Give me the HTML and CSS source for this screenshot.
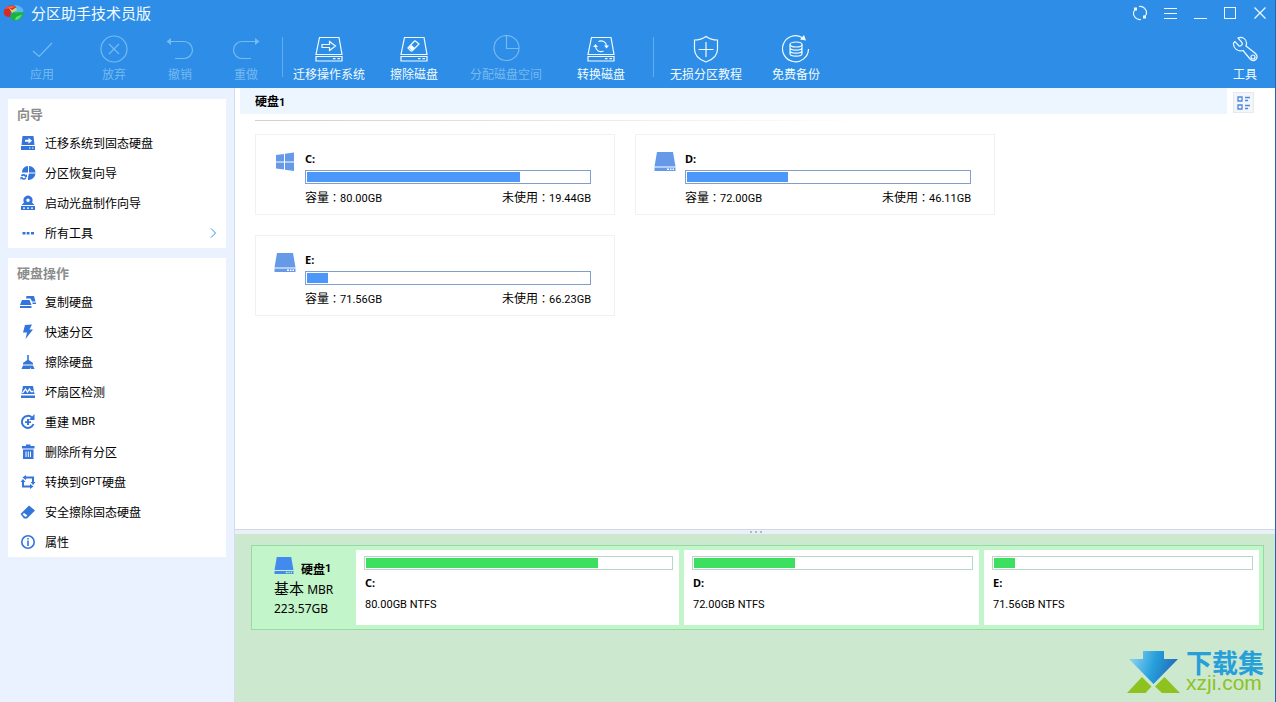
FILE: index.html
```html
<!DOCTYPE html>
<html lang="zh-CN">
<head>
<meta charset="utf-8">
<title>分区助手技术员版</title>
<link rel="stylesheet" href="styles.css">
</head>
<body>
<svg class="defs" aria-hidden="true">
  <symbol id="drive" viewBox="0 0 22 20">
    <path d="M3 0H19L21.500 14.500H.500Z"/><path fill-rule="evenodd" d="M.500 15.500H21.500V19H.500ZM13 16.500V18H15V16.500ZM16 16.500V18H17.500V16.500ZM18.500 16.500V18H20V16.500Z"/>
  </symbol>
  <symbol id="drive-line" viewBox="0 0 28 28">
    <path d="M4.500 2.500H24L27 19.500H1ZM1 21.500H27V26H1ZM18 23.700H20.500M22.500 23.700H25"/>
  </symbol>
</svg>

<header class="top">
  <div class="titlebar">
    <svg class="logo" viewBox="0 0 22 20">
      <path d="M10 3C14 1 20 4 20.500 8C19 11 15 11 11 9Z" fill="#58b8f0"/>
      <path d="M8 11C12 9 17 9 20.500 9.500C20.500 14 16 18 11.500 17.500C8.500 17 7 15 8 11Z" fill="#18b53a"/>
      <path d="M13 14L19 11.500C18 15 15 17 12 17Z" fill="#52e46c"/>
      <path d="M1 8C2 3 9 1 13 4C14 7 11 9 8 9L7 14C3 14 0 12 1 8Z" fill="#d62a23"/>
      <path d="M2 6C4 3 9 2 12 4C9 6 5 5 2 6Z" fill="#f5624d"/>
      <path d="M6 5L9 7L13 4.500L14 7L9 10Z" fill="#c5dd72"/>
    </svg>
    <h1>分区助手技术员版</h1>
    <div class="window-controls">
      <button aria-label="刷新"><svg class="line" viewBox="0 0 16 16"><path d="M7 1.500A6.500 6.500 0 0 1 14.500 9M9 14.500A6.500 6.500 0 0 1 1.500 7M4 3.500L1.500 7M12 12.500L14.500 9"/><path class="solid" d="M2 2.500H5V5.500H2ZM11 10.500H14V13.500H11Z"/></svg></button>
      <button aria-label="菜单"><svg class="line crisp" viewBox="0 0 16 16"><path d="M1.500 3.500H14.500M1.500 8.500H14.500M1.500 13.500H14.500"/></svg></button>
      <button aria-label="最小化"><svg class="line crisp" viewBox="0 0 16 16"><path d="M1.500 13.500H14.500"/></svg></button>
      <button aria-label="最大化"><svg class="line crisp" viewBox="0 0 16 16"><path d="M2.500 2.500H13.500V13.500H2.500Z"/></svg></button>
      <button aria-label="关闭"><svg class="line" viewBox="0 0 16 16"><path d="M2.500 2.500L13.500 13.500M13.500 2.500L2.500 13.500"/></svg></button>
    </div>
  </div>
  <nav class="toolbar">
    <button class="tool w72" disabled><svg class="line" viewBox="0 0 28 28"><path d="M5 16L11 21.500L24 8"/></svg>应用</button>
    <button class="tool w72" disabled><svg class="line" viewBox="0 0 28 28"><circle cx="14" cy="14" r="13"/><path d="M9 9L19 19M19 9L9 19"/></svg>放弃</button>
    <button class="tool w60" disabled><svg class="line" viewBox="0 0 28 28"><path d="M4 6.500H18A8.500 8.500 0 0 1 18 23.500H9"/><path class="solid" d="M.500 6.500L5 3V10Z"/></svg>撤销</button>
    <button class="tool w72" disabled><svg class="line" viewBox="0 0 28 28"><path d="M24 6.500H10A8.500 8.500 0 0 0 10 23.500H19"/><path class="solid" d="M27.500 6.500L23 3V10Z"/></svg>重做</button>
    <span class="sep"></span>
    <button class="tool w92"><svg class="line" viewBox="0 0 28 28"><use href="#drive-line"/><path d="M7 9.500H14.500V6.500L20.500 11L14.500 15.500V12.500H7Z"/></svg>迁移操作系统</button>
    <button class="tool w78"><svg class="line" viewBox="0 0 28 28"><use href="#drive-line"/><path d="M8 13L14 6.500Q15 5.500 16 6.500L19 9L12.500 15.500Q11.500 16.500 10.500 15.500Z"/><path class="solid" d="M9 12.500L11.500 10L15 13L12 16Z"/></svg>擦除磁盘</button>
    <button class="tool w106" disabled><svg class="line" viewBox="0 0 28 28"><circle cx="14.500" cy="13" r="12.500"/><path d="M14.500 .500V13.500H27"/></svg>分配磁盘空间</button>
    <button class="tool w84"><svg class="line" viewBox="0 0 28 28"><use href="#drive-line"/><path d="M11.500 6.500A5.500 5.500 0 0 1 19.500 11M16.500 16A5.500 5.500 0 0 1 8.500 11.500"/><path class="solid" d="M6 12L8.500 9L11 12ZM17 10.500L19.500 13.500L22 10.500Z"/></svg>转换磁盘</button>
    <span class="sep far"></span>
    <button class="tool w104"><svg class="line" viewBox="0 0 28 28"><path d="M14 1.500C10.500 4 6.500 5 2.500 5V14C2.500 20.500 8 25 14 27C20 25 25.500 20.500 25.500 14V5C21.500 5 17.500 4 14 1.500ZM14 7V22M6.500 14.500H21.500"/></svg>无损分区教程</button>
    <button class="tool w76"><svg class="line" viewBox="0 0 28 28"><path d="M20 2.500A13 13 0 1 0 26.500 14"/><path class="solid" d="M22 0L24 5.500L18 4.500Z"/><ellipse cx="14" cy="9.500" rx="6" ry="2.500"/><path d="M8 9.500V18.500C8 22 20 22 20 18.500V9.500M8 12.500C8 16 20 16 20 12.500M8 15.500C8 19 20 19 20 15.500"/></svg>免费备份</button>
    <button class="tool w60 last"><svg class="line" viewBox="0 0 28 28"><path d="M7 3C11 1 16 4 15.500 9L15 11L24.500 18.500C28.500 23 23.500 27.500 19.500 24.500L12 15.500C7 17 2 13.500 2.500 8L4 6.500L8 11C10 11.500 12 9.500 11 7.500Z"/><circle cx="22" cy="22" r="2"/></svg>工具</button>
  </nav>
</header>

<div class="body">
  <aside class="sidebar">
    <section class="panel">
      <h2>向导</h2>
      <ul>
        <li><button><svg viewBox="0 0 16 16"><path fill-rule="evenodd" d="M2.500 1H13.500L14.500 10H1.500ZM5 4.700V6.700H8.500V8.700L12 5.700L8.500 2.700V4.700Z"/><path fill-rule="evenodd" d="M1 11H15V15H1ZM9 12.500V13.500H10.500V12.500ZM12 12.500V13.500H13.500V12.500Z"/></svg>迁移系统到固态硬盘</button></li>
        <li><button><svg viewBox="0 0 16 16"><path d="M8 1V7.500H2A6 6 0 0 1 8 1ZM9 1A6.500 6.500 0 0 1 15.500 7.500H9ZM15.500 8.500A7 7 0 0 1 8 15V12L9 8.500Z"/><path class="stroke" d="M1.500 11C2.500 9.500 4.500 9.500 5.500 11M6 12.500C5 14.500 3 14.500 2 13"/><path d="M7 9V12H4.500ZM.500 15V12H3Z"/></svg>分区恢复向导</button></li>
        <li><button><svg viewBox="0 0 16 16"><path fill-rule="evenodd" d="M8 .500A4.700 4.700 0 0 1 12 7.500L14.500 10H1.500L4 7.500A4.700 4.700 0 0 1 8 .500ZM8 3.500A1.700 1.700 0 0 0 8 7A1.700 1.700 0 0 0 8 3.500Z"/><path fill-rule="evenodd" d="M1 11H15V15H1ZM3 12.500V13.700H5V12.500ZM7 12.500V13.700H9V12.500ZM11 12.500V13.700H13V12.500Z"/></svg>启动光盘制作向导</button></li>
        <li><button><svg viewBox="0 0 16 16"><path d="M2.500 7H5.500V9.500H2.500ZM6.700 7H9.500V9.500H6.700ZM11 7H14V9.500H11Z"/></svg>所有工具<svg class="chevron" viewBox="0 0 8 12"><path d="M2 1.500L6.500 6L2 10.500"/></svg></button></li>
      </ul>
    </section>
    <section class="panel">
      <h2>硬盘操作</h2>
      <ul>
        <li><button><svg viewBox="0 0 16 16"><path d="M6.500 2H14L15.500 7.500H12L10.500 4.500H6ZM12.500 8.500H16V10H12.500ZM2 6H9.500L11.500 11H0ZM0 12H11.500V14H0Z"/></svg>复制硬盘</button></li>
        <li><button><svg viewBox="0 0 16 16"><path d="M5 1L12 .500L9.500 5.500H13L5.500 15L7 8.500H3Z"/></svg>快速分区</button></li>
        <li><button><svg viewBox="0 0 16 16"><path d="M7.200 1H8.800V6L13 9V10.500H3V9L7.200 6ZM3 11.500H13L14.500 15H11L10 13V15H1.500Z"/></svg>擦除硬盘</button></li>
        <li><button><svg viewBox="0 0 16 16"><path d="M3 2H13L14.500 10H1.500ZM1 11.500H15V14H1Z"/><path class="wave" d="M2.500 9L5.500 5L7.500 8L9.500 5L11 7.500L13.500 7.500"/></svg>坏扇区检测</button></li>
        <li><button><svg viewBox="0 0 16 16"><path class="stroke thick" d="M12 3.500A6 6 0 1 0 13.500 10"/><path d="M14.500 0V6H9ZM7 5H9V7.200H11V9H9V11H7V9H5V7.200H7Z"/></svg>重建 <span class="latin">MBR</span></button></li>
        <li><button><svg viewBox="0 0 16 16"><path fill-rule="evenodd" d="M6 2V.500H10.500V2H14.500V4.500H2V2ZM3 5.500H13.500V15H3ZM5.500 7.500V13H6.500V7.500ZM7.800 7.500V13H8.800V7.500ZM10 7.500V13H11V7.500Z"/></svg>删除所有分区</button></li>
        <li><button><svg viewBox="0 0 16 16"><path class="stroke thick" d="M5 3.500H13V8M3 8V12.500H11"/><path d="M2.500 3.500L6 1V6ZM.500 8H5.500L3 5ZM10.500 8H15.500L13 11ZM10 10V15L13.500 12.500Z"/></svg>转换到<span class="latin">GPT</span>硬盘</button></li>
        <li><button><svg viewBox="0 0 16 16"><path fill-rule="evenodd" d="M.500 10L9 1.500L15 6.500L7 14.500H4ZM4 9L2.500 10.500L5.500 13L7.500 11.500Z"/></svg>安全擦除固态硬盘</button></li>
        <li><button><svg viewBox="0 0 16 16"><circle class="stroke" cx="8" cy="8" r="6.200"/><path d="M7.200 4H8.800V5.500H7.200ZM7.200 6.500H8.800V12H7.200Z"/></svg>属性</button></li>
      </ul>
    </section>
  </aside>

  <main>
    <section class="volumes">
      <div class="volumes-head">
        <h2>硬盘<span class="latin">1</span></h2>
        <button class="view" aria-label="切换视图"><svg viewBox="0 0 14 14"><path d="M1 1H5V5H1ZM1 9H5V13H1ZM8 1.500H13M8 4.500H11M8 9.500H13M8 12.500H11"/></svg></button>
      </div>
      <hr class="fade">
      <div class="cards">
        <article class="card">
          <svg class="vol-icon" viewBox="0 0 22 20"><path d="M2 3L10 2V9.500H2ZM11 1.800L20 .500V9.500H11ZM2 10.500H10V17.500L2 16.500ZM11 10.500H20V19L11 17.800Z"/></svg>
          <div class="vol">
            <h3>C:</h3>
            <div class="bar"><div style="width:75.5%"></div></div>
            <p><span>容量<i lang="zh-TW">：</i><span class="latin">80.00GB</span></span><span>未使用<i lang="zh-TW">：</i><span class="latin">19.44GB</span></span></p>
          </div>
        </article>
        <article class="card">
          <svg class="vol-icon"><use href="#drive"/></svg>
          <div class="vol">
            <h3>D:</h3>
            <div class="bar"><div style="width:35.7%"></div></div>
            <p><span>容量<i lang="zh-TW">：</i><span class="latin">72.00GB</span></span><span>未使用<i lang="zh-TW">：</i><span class="latin">46.11GB</span></span></p>
          </div>
        </article>
        <article class="card">
          <svg class="vol-icon"><use href="#drive"/></svg>
          <div class="vol">
            <h3>E:</h3>
            <div class="bar"><div style="width:7.5%"></div></div>
            <p><span>容量<i lang="zh-TW">：</i><span class="latin">71.56GB</span></span><span>未使用<i lang="zh-TW">：</i><span class="latin">66.23GB</span></span></p>
          </div>
        </article>
      </div>
    </section>
    <div class="splitter"><span></span><span></span><span></span></div>
    <section class="disks">
      <div class="disk">
        <div class="disk-info">
          <h3><svg><use href="#drive"/></svg>硬盘<span class="latin">1</span></h3>
          <p><b>基本</b> MBR</p>
          <p>223.57GB</p>
        </div>
        <div class="part" style="flex-grow:309"><div class="bar green"><div style="width:76%"></div></div><h3>C:</h3><p>80.00GB NTFS</p></div>
        <div class="part" style="flex-grow:281"><div class="bar green"><div style="width:36.6%"></div></div><h3>D:</h3><p>72.00GB NTFS</p></div>
        <div class="part" style="flex-grow:261"><div class="bar green"><div style="width:8.2%"></div></div><h3>E:</h3><p>71.56GB NTFS</p></div>
      </div>
    </section>
  </main>
</div>

<div class="watermark">
  <svg viewBox="0 0 54 44">
    <defs><linearGradient id="arrow" x1="0" x2="1" y1="0.300" y2="0.500"><stop offset="0" stop-color="#8fd3f0"/><stop offset=".5" stop-color="#26a0dc"/><stop offset="1" stop-color="#2466b4"/></linearGradient></defs>
    <path fill="url(#arrow)" d="M16 1H37V9H51L26.500 34L2 9H16Z"/>
    <path fill="#8dc21f" d="M15 27L24.500 36.500L18.500 43H0ZM37.500 27L53 43H35L28 36.500Z"/>
  </svg>
  <div><strong>下载集</strong><span>xzji.com</span></div>
</div>
</body>
</html>
```
FILE: styles.css
```css
* { box-sizing: border-box; margin: 0; padding: 0; }
body {
  display: flex; flex-direction: column; min-height: 100vh; position: relative;
  font: 12px/16px "Noto Sans CJK SC", sans-serif; color: #000; background: #fff;
  border-right: 1px solid #1f66ab;
}
button { font: inherit; color: inherit; background: none; border: 0; }
ul { list-style: none; }
i, b { font-style: normal; font-weight: normal; }
.defs { position: absolute; width: 0; height: 0; }
.latin { font-family: Roboto, "Noto Sans CJK SC", sans-serif; font-size: 11px; }

.top { background: #2d8de7; color: #f2fcff; }
.line { fill: none; stroke: currentColor; stroke-width: 1.200; }
.crisp { shape-rendering: crispEdges; stroke-width: 1; }
.solid { fill: currentColor; stroke: none; }
.titlebar { display: flex; align-items: center; height: 26px; padding-left: 3px; }
.logo { width: 22px; height: 20px; }
.titlebar h1 { margin-left: 6px; font-size: 15px; line-height: 24px; font-weight: normal; }
.window-controls { display: flex; margin-left: auto; }
.window-controls button { width: 30px; height: 26px; display: grid; place-items: center; }
.window-controls svg { width: 16px; height: 16px; }

.toolbar { display: flex; height: 62px; padding: 9px 0 0 6px; }
.tool { display: flex; flex-direction: column; align-items: center; gap: 3px; white-space: nowrap; }
.tool svg { width: 28px; height: 28px; }
.tool:disabled { color: #76bbf1; }
.w60 { width: 60px; } .w72 { width: 72px; } .w76 { width: 76px; }
.w78 { width: 78px; } .w84 { width: 84px; } .w92 { width: 92px; } .w104 { width: 104px; } .w106 { width: 106px; }
.last { margin-left: auto; }
.sep { width: 1px; height: 40px; margin-top: 2px; background: #64abee; }
.sep.far { margin-left: 10px; }

.body { display: flex; flex: 1; }
.sidebar {
  display: flex; flex-direction: column; gap: 10px; width: 235px; flex: none;
  padding: 11px 8px 0; background: #e9f2fe; border-right: 1px solid #d2deeb;
}
.panel { background: #fff; }
.panel h2 { padding: 0 9px; font-size: 13px; line-height: 29px; color: #8c8c8c; }
.panel button { display: flex; align-items: center; width: 100%; height: 30px; padding: 0 9px 0 12px; white-space: pre; }
.panel svg { width: 16px; height: 16px; margin-right: 9px; fill: #3475dc; }
.panel .stroke { fill: none; stroke: #3475dc; stroke-width: 1.600; }
.panel .thick { stroke-width: 2; }
.wave { fill: none; stroke: #fff; stroke-width: 1.300; }
.panel .chevron { width: 8px; height: 12px; margin: 0 0 0 auto; fill: none; stroke: #2d8de7; }

main { flex: 1; display: flex; flex-direction: column; min-width: 0; }
.volumes { flex: 1; }
.volumes-head { display: flex; gap: 6px; height: 26px; padding: 0 21px 0 5px; }
.volumes-head h2 { flex: 1; padding-left: 15px; font-size: 12px; line-height: 26px; background: #edf5fe; }
.view { width: 21px; height: 21px; margin-top: 4px; display: grid; place-items: center; background: #f3f6f9; border: 1px solid #e3eaf1; }
.view svg { width: 14px; height: 14px; fill: none; stroke: #5186dc; stroke-width: 1.300; }
.fade { height: 1px; border: 0; margin: 6px 0 13px 20px; background: linear-gradient(90deg, #d0d0d0, #fff 60%); }
.cards { display: flex; flex-wrap: wrap; gap: 20px; padding: 0 20px; }
.card { display: flex; width: 360px; padding: 16px 23px 7px 18px; border: 1px solid #f1f1f1; }
.vol-icon { width: 22px; height: 20px; margin: 1px 9px 0 0; fill: #6699e8; flex: none; }
.vol { flex: 1; }
h3 { font: bold 11px/16px "Noto Sans", sans-serif; }
.bar { height: 14px; padding: 1px; background: #fff; border: 1px solid #829fcb; }
.bar div { height: 100%; background: #4c98fa; }
.vol .bar { margin-top: 3px; }
.vol p { display: flex; justify-content: space-between; height: 18px; margin-top: 5px; }
.vol i { font: 11px "Noto Sans CJK TC", sans-serif; }

.splitter { display: flex; justify-content: center; align-items: flex-start; gap: 3px; height: 5px; padding: 1px 0 0 2px; background: #e9f0f8; border-top: 1px solid #d1d8e2; }
.splitter span { width: 2px; height: 2px; background: #b2b9c4; }
.disks { height: 168px; padding: 11px 11px 0 16px; background: #cce8cf; }
.disk { display: flex; gap: 5px; height: 85px; padding: 4px; border: 1px solid #95dca2; background: #c2f5c9; }
.disk-info { width: 95px; padding: 5px 0 0 18px; flex: none; font: 12px/19px "Noto Sans", "Noto Sans CJK SC", sans-serif; }
.disk-info h3 { display: flex; align-items: flex-end; height: 22px; margin-bottom: 2px; font: bold 12px/16px "Noto Sans CJK SC", sans-serif; }
.disk-info svg { width: 20px; height: 18px; margin: 0 7px 2px 0; fill: #438aee; }
.disk-info b { font-size: 15px; }
.part { flex: 1 1 0; padding: 6px 6px 0 8px; background: #fff; font: 11px/16px Roboto, sans-serif; }
.green { border-color: #b7d9c6; }
.green div { background: #3cdf60; }
.part h3 { margin: 5px 0 6px 1px; }
.part p { margin-left: 1px; }

.watermark { position: absolute; right: 11px; bottom: 8px; display: flex; gap: 5px; }
.watermark > svg { width: 54px; height: 44px; }
.watermark div { display: flex; flex-direction: column; }
.watermark strong { font-size: 26px; line-height: 23px; font-weight: bold; color: #27a0da; }
.watermark span { font: 21px/20px "Liberation Sans", sans-serif; color: #8dc21f; }
```
